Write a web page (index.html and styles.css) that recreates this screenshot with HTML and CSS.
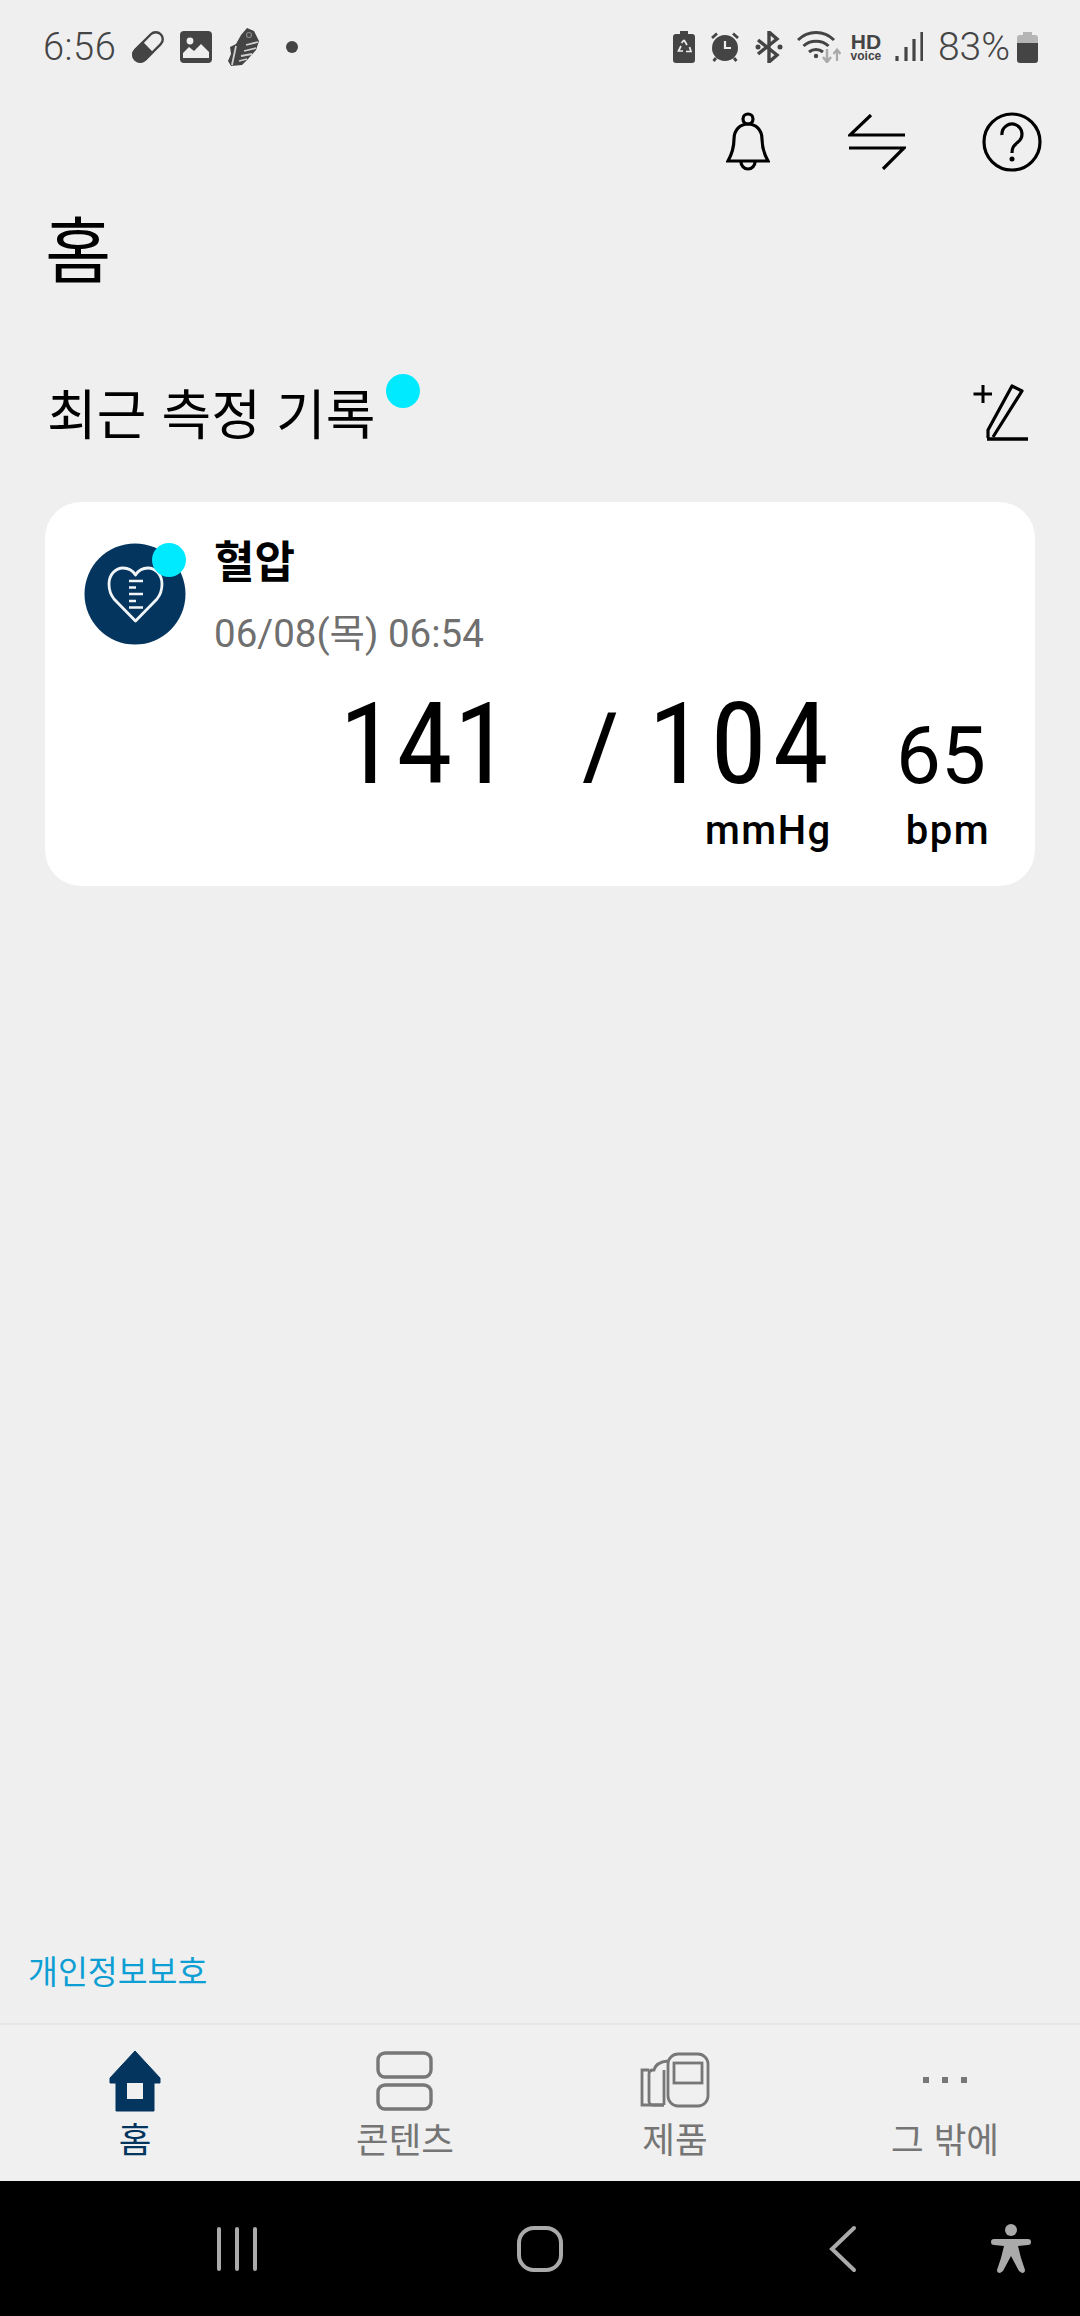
FILE: index.html
```html
<!DOCTYPE html>
<html lang="ko">
<head>
<meta charset="utf-8">
<title>홈</title>
<link rel="stylesheet" href="styles.css">
</head>
<body>
<div class="app">
  <header class="status">
    <div class="status-group">
      <span class="clock">6:56</span>
      <svg class="ic" width="32" height="32" viewBox="0 0 32 32"><g transform="rotate(-45 16 16)"><rect x="-2" y="9" width="36" height="14" rx="7" fill="none" stroke="#444" stroke-width="2.4"/><path d="M16 8H5a8 8 0 0 0 0 16H16Z" fill="#444"/></g></svg>
      <svg class="ic" width="32" height="32" viewBox="0 0 32 32"><rect width="32" height="32" rx="4" fill="#444"/><circle cx="10" cy="10" r="3.4" fill="#efefef"/><path d="M3 27V22L9 16L14 20L21 13L29 21V27Z" fill="#efefef"/></svg>
      <svg class="ic shoe" width="32" height="40" viewBox="0 0 32 40"><path d="M19 1L26 4L31 14L28 23L20 32L14 38L3 39L0 34L3 27L2 20L8 17L13 8Z" fill="#444"/><path d="M30 15L18 18M28 21L16 24M24 27L13 29M19 32L11 34M8 19L4 38" stroke="#cfcfcf" stroke-width="1.8" fill="none"/><circle cx="21" cy="8" r="2.5" fill="none" stroke="#888" stroke-width="1.2"/></svg>
      <span class="notif-dot"></span>
    </div>
    <div class="status-group status-right">
      <svg width="22" height="32" viewBox="0 0 22 32"><path d="M7 0H15V3H19Q22 3 22 6V29Q22 32 19 32H3Q0 32 0 29V6Q0 3 3 3H7Z" fill="#444"/><path d="M11 9L14 14M8 15L5.5 20H10M16.5 16L18 20.5H13M8.5 12L11 9" stroke="#efefef" stroke-width="1.7" fill="none"/></svg>
      <svg width="28" height="30" viewBox="0 0 28 30"><circle cx="14" cy="16" r="13" fill="#444"/><path d="M14 9V16H20" stroke="#efefef" stroke-width="2.2" fill="none"/><path d="M1 6L6 1.5M27 6L22 1.5M5 26L2.5 29M23 26L25.5 29" stroke="#444" stroke-width="2.8" fill="none"/></svg>
      <svg width="28" height="32" viewBox="0 0 28 32"><path d="M3 9L22 24L14 31V1L22 8L3 23" stroke="#444" stroke-width="3.4" fill="none"/><circle cx="3" cy="16" r="2.5" fill="#444"/><circle cx="25" cy="16" r="2.5" fill="#444"/></svg>
      <svg class="wifi" width="44" height="32" viewBox="0 0 44 32"><path d="M1 9C11 -1 27 -1 37 9M6.5 15C13 8.5 25 8.5 31.5 15M12 21C16 17.5 22 17.5 26 21" stroke="#444" stroke-width="3" fill="none"/><circle cx="19" cy="25" r="2.2" fill="#444"/><path d="M30 18V30M26 26L30 31L34 26" stroke="#aaa" stroke-width="2.5" fill="none"/><path d="M40 30V19M36.5 23L40 18.5L43.5 23" stroke="#aaa" stroke-width="2.2" fill="none"/></svg>
      <span class="hd"><b>HD</b><i>voice</i></span>
      <svg class="signal" width="28" height="30" viewBox="0 0 28 30"><path d="M2 29V24M11 29V15M19 29V7M27 29V0" stroke="#444" stroke-width="3.2" fill="none"/></svg>
      <span class="battery-text">83%</span>
      <svg class="battery" width="21" height="31" viewBox="0 0 21 31"><path d="M6 0H15V3H18Q21 3 21 6V11H0V6Q0 3 3 3H6Z" fill="#b5b5b5"/><path d="M0 11H21V28Q21 31 18 31H3Q0 31 0 28Z" fill="#444"/></svg>
    </div>
  </header>

  <div class="toolbar">
    <svg class="bell" width="44" height="60" viewBox="0 0 44 60" fill="none" stroke="#000" stroke-width="3.2"><circle cx="22" cy="7" r="5"/><path d="M2 49C7 40 8 34 8 27C8 18 14 12 22 12C30 12 36 18 36 27C36 34 37 40 42 49Z"/><path d="M15 50A7 7 0 0 0 29 50"/></svg>
    <svg width="58" height="56" viewBox="0 0 58 56" fill="none" stroke="#000" stroke-width="3.2"><path d="M57 21H2L23 1"/><path d="M1 34H56L35 55"/></svg>
    <svg width="60" height="60" viewBox="0 0 60 60" fill="none" stroke="#000" stroke-width="3.2"><circle cx="30" cy="30" r="28"/><path d="M20 23A10 10 0 1 1 36 30C32 33.5 30 35 30 41"/><circle cx="30" cy="47" r="2.5" fill="#000" stroke="none"/></svg>
  </div>

  <h1 class="page-title">홈</h1>

  <section class="section-head">
    <h2 class="section-title">최근 측정 기록<span class="new-dot"></span></h2>
    <svg width="58" height="58" viewBox="0 0 58 58" fill="none" stroke="#000"><path d="M11 2V20M1.5 11H20" stroke-width="3"/><path d="M16 55V47L40 3L50 8L21 54" stroke-width="3.2" stroke-linejoin="round"/><path d="M15 56H56" stroke-width="3.6"/></svg>
  </section>

  <article class="card">
    <div class="card-top">
      <div class="badge">
        <svg width="102" height="102" viewBox="0 0 102 102"><circle cx="51" cy="51" r="50.5" fill="#04355e"/><path d="M51.5 78L30 56C26 51 25 46 25 41C25 31 32 25 39 25C45 25 49 28 51.5 32C54 28 58 25 64 25C71 25 78 31 78 41C78 46 77 51 73 56Z" fill="none" stroke="#f2f5f7" stroke-width="2.8" stroke-linejoin="round"/><path d="M45 38H59M45 44.5H52M45 51H59M45 58H52M45 64.5H59" stroke="#f2f5f7" stroke-width="2.6"/></svg>
        <span class="badge-dot"></span>
      </div>
      <div class="card-text">
        <div class="card-title">혈압</div>
        <div class="card-date">06/08(목) 06:54</div>
      </div>
    </div>
    <div class="values">
      <span class="big">141</span>
      <span class="slash">/</span>
      <span class="big big-wide">104</span>
      <span class="mid">65</span>
    </div>
    <div class="units">
      <span>mmHg</span>
      <span>bpm</span>
    </div>
  </article>

  <div class="spacer"></div>
  <a class="privacy" href="#">개인정보보호</a>

  <nav class="tabs">
    <div class="tab tab-active">
      <svg width="52" height="62" viewBox="0 0 52 62"><path d="M26 1L51 28V33H45V61H7V33H1V28Z" fill="#04355e" stroke="#04355e" stroke-linejoin="round"/><rect x="18" y="33" width="16" height="16" fill="#f0f0f0"/></svg>
      <span>홈</span>
    </div>
    <div class="tab">
      <svg width="58" height="62" viewBox="0 0 58 62" fill="none" stroke="#777" stroke-width="3.4"><rect x="2" y="3" width="53" height="24" rx="7"/><rect x="2" y="35" width="53" height="24" rx="7"/></svg>
      <span>콘텐츠</span>
    </div>
    <div class="tab">
      <svg width="70" height="62" viewBox="0 0 70 62" fill="none" stroke="#777" stroke-width="2.8"><rect x="28" y="4" width="40" height="52" rx="10"/><rect x="34" y="13" width="28" height="20"/><path d="M9 20H2V55H24"/><path d="M24 55H13Q9 55 9 51V24Q9 20 13 20H14Q16 12 28 11"/><path d="M24 20V55"/></svg>
      <span>제품</span>
    </div>
    <div class="tab">
      <svg width="46" height="62" viewBox="0 0 46 62" fill="#777"><rect x="1" y="27" width="6" height="6"/><rect x="20" y="27" width="6" height="6"/><rect x="39" y="27" width="6" height="6"/></svg>
      <span>그 밖에</span>
    </div>
  </nav>

  <footer class="sysnav">
    <svg width="40" height="44" viewBox="0 0 40 44" fill="none" stroke="#aaa" stroke-width="4" stroke-linecap="round"><path d="M2 2V42M20 2V42M38 2V42"/></svg>
    <svg width="46" height="46" viewBox="0 0 46 46" fill="none" stroke="#aaa" stroke-width="4"><rect x="2" y="2" width="42" height="42" rx="15"/></svg>
    <svg width="28" height="48" viewBox="0 0 28 48" fill="none" stroke="#aaa" stroke-width="4" stroke-linecap="round"><path d="M25 3L3 24L25 45"/></svg>
    <svg width="40" height="50" viewBox="0 0 40 50" fill="#aaa"><circle cx="20" cy="6" r="6"/><path d="M3 15H37Q40 15 40 18T37 21L27 22L30 34L34 46Q34 49 31 49L28 47L20 32L12 47L9 49Q6 49 6 46L10 34L13 22L3 21Q0 21 0 18T3 15Z"/></svg>
  </footer>
</div>
</body>
</html>
```

FILE: styles.css
```css
* { box-sizing: border-box; }
html, body { margin: 0; padding: 0; }
body {
  font-family: "Noto Sans CJK KR", "Noto Sans", sans-serif;
  background: #efeff0;
  color: #000;
}
.app {
  width: 1080px;
  height: 2316px;
  display: flex;
  flex-direction: column;
  overflow: hidden;
}
svg { display: block; flex: none; }

.status {
  height: 94px;
  padding: 0 42px 0 43px;
  display: flex;
  justify-content: space-between;
  align-items: center;
  color: #444;
}
.status-group { display: flex; align-items: center; gap: 16px; }
.clock { font: 300 38px/1 Roboto, sans-serif; letter-spacing: .5px; }
.notif-dot { width: 12px; height: 12px; border-radius: 50%; background: #444; margin-left: 10px; margin-right: 246px; }
.status-right { gap: 16px; }
.wifi { margin-left: -2px; }
.hd { display: flex; flex-direction: column; align-items: center; width: 34px; margin-left: -8px; font-family: "Liberation Sans", sans-serif; line-height: 1; }
.hd b { font-size: 21px; line-height: 18px; }
.hd i { font-style: normal; font-weight: 700; font-size: 12px; line-height: 11px; }
.signal { margin-left: -4px; }
.battery-text { font: 300 39px/1 Roboto, sans-serif; margin-left: -1px; }
.battery { margin-left: -9px; }

.toolbar {
  height: 96px;
  padding-right: 38px;
  display: flex;
  justify-content: flex-end;
  align-items: center;
  gap: 76px;
}
.bell { margin-right: 2px; }
.page-title {
  margin: 12px 0 0 45px;
  font-size: 72px;
  line-height: 88px;
  font-weight: 400;
}
.section-head {
  margin-top: 87px;
  padding: 0 50px 0 47px;
  height: 70px;
  display: flex;
  justify-content: space-between;
  align-items: center;
}
.section-title {
  margin: 0;
  font-size: 54px;
  line-height: 70px;
  font-weight: 400;
  position: relative;
}
.new-dot {
  position: absolute;
  left: 339px;
  top: -3px;
  width: 34px;
  height: 34px;
  border-radius: 50%;
  background: #00eaff;
}
.card {
  margin: 55px 45px 0;
  height: 384px;
  background: #fff;
  border-radius: 36px;
  padding: 35px 45px 0 39px;
}
.card-top { display: flex; gap: 28px; }
.badge { position: relative; width: 102px; height: 102px; margin-top: 6px; }
.badge-dot {
  position: absolute;
  right: 0;
  top: 0;
  width: 34px;
  height: 34px;
  border-radius: 50%;
  background: #00eaff;
}
.card-title { font-size: 44px; line-height: 50px; font-weight: 700; margin-top: -3px; }
.card-date { font: 400 38.5px/50px Roboto, "Noto Sans CJK KR", sans-serif; color: #6f6f6f; margin-top: 25px; }
.values {
  display: flex;
  justify-content: flex-end;
  align-items: baseline;
  font-family: Roboto, sans-serif;
  margin-top: 30px;
  line-height: 110px;
}
.big { font-size: 114px; font-weight: 420; font-stretch: condensed; letter-spacing: 1px; }
.big-wide { letter-spacing: 6px; }
.slash { font-size: 90px; font-weight: 500; margin: 0 30px 0 72px; transform: translateY(-6px); }
.mid { font-size: 80px; font-weight: 420; font-stretch: 90%; margin: 0 4px 0 61px; }
.units {
  display: flex;
  justify-content: flex-end;
  gap: 74px;
  margin-top: -5px;
  font: 500 40px/50px Roboto, sans-serif;
  letter-spacing: 1.5px;
}
.spacer { flex: 1; }
.privacy {
  color: #0d9fd3;
  font-size: 32.5px;
  line-height: 46px;
  margin: 0 0 30px 28px;
  text-decoration: none;
}
.tabs {
  height: 158px;
  background: #f0f0f0;
  border-top: 2px solid #e6e6e6;
  display: grid;
  grid-template-columns: repeat(4, 1fr);
  padding-top: 25px;
}
.tab {
  display: flex;
  flex-direction: column;
  align-items: center;
  color: #757575;
  font-size: 35.5px;
  line-height: 44px;
  gap: 4px;
}
.tab-active { color: #04355e; }
.sysnav {
  height: 135px;
  background: #000;
  display: flex;
  align-items: center;
  padding: 0 0 0 217px;
}
.sysnav svg:nth-child(1) { margin-right: 260px; }
.sysnav svg:nth-child(2) { margin-right: 266px; }
.sysnav svg:nth-child(3) { margin-right: 134px; }
```
